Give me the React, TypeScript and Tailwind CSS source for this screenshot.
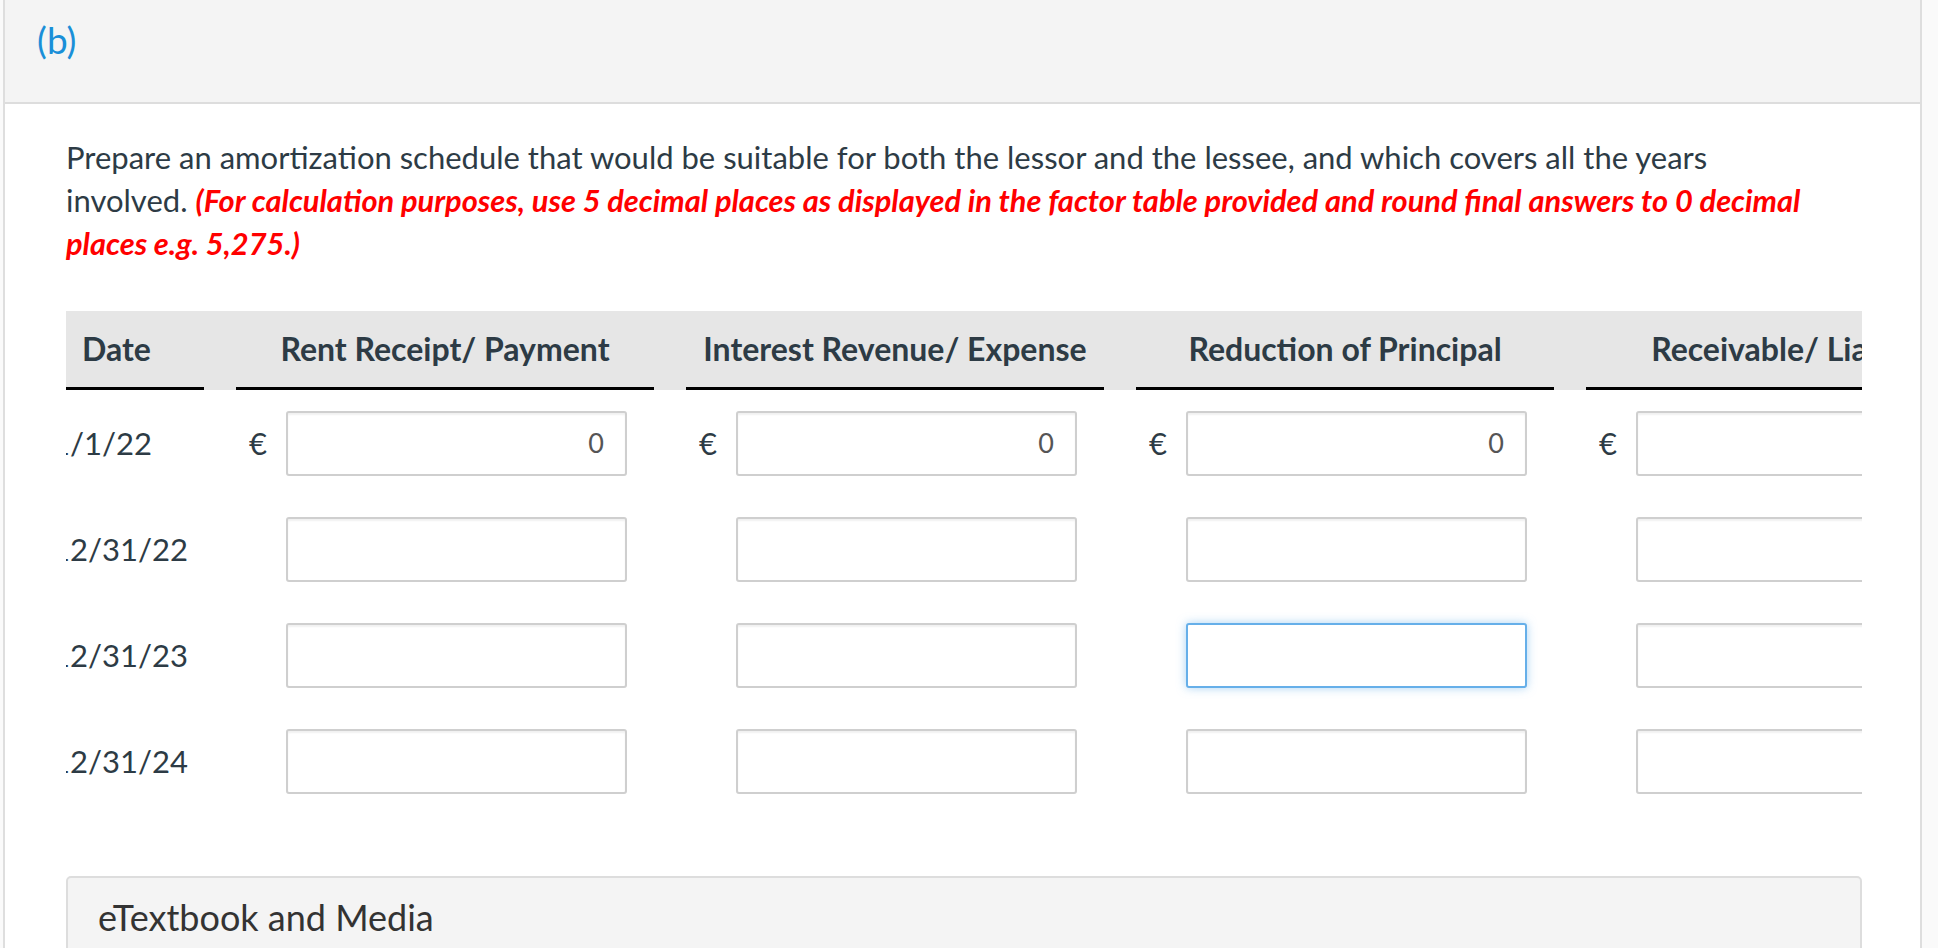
import React from "react";

const font = { fontFamily: "Lato, 'Noto Sans', sans-serif" };

function MoneyCell({ euro, value, focused }: { euro?: boolean; value?: string; focused?: boolean }) {
  return (
    <div className="w-[418px] shrink-0 flex items-center">
      <div className="w-[50px] shrink-0 pl-[13px] text-[31px] leading-none text-[#2d3b45]">{euro ? "€" : ""}</div>
      <div
        className={
          "w-[341px] h-[65px] shrink-0 rounded-[3px] bg-white flex items-center justify-end pr-[21px] text-[27px] text-[#555] " +
          (focused
            ? "border-2 border-[#66afe9] shadow-[0_0_10px_rgba(102,175,233,0.55)]"
            : "border-2 border-[#cfcfcf] shadow-[inset_0_2px_2px_rgba(0,0,0,0.06)]")
        }
      >
        {value}
      </div>
    </div>
  );
}

function Row({ date, first, focusIdx }: { date: string; first?: boolean; focusIdx?: number }) {
  return (
    <div className="flex gap-[32px] h-[106px] items-center">
      <div className="w-[138px] shrink-0 overflow-hidden">
        <span className="block -ml-[14px] text-[31px] text-[#2d3b45] whitespace-nowrap">{date}</span>
      </div>
      {[0, 1, 2, 3].map((i) => (
        <MoneyCell key={i} euro={first} value={first && i < 3 ? "0" : ""} focused={focusIdx === i} />
      ))}
    </div>
  );
}

export default function App() {
  const headers = ["Rent Receipt/ Payment", "Interest Revenue/ Expense", "Reduction of Principal", "Receivable/ Liability"];
  return (
    <div className="w-[1938px] h-[948px] overflow-hidden bg-[#fafafa]" style={font}>
      <div className="ml-[3px] w-[1919px] h-[948px] bg-white border-l-2 border-r-2 border-[#dedede]">
        <div className="h-[104px] bg-[#f4f4f4] border-b-2 border-[#dddddd] pl-[32px] pt-[18px]">
          <span className="text-[37px] leading-[44px] text-[#1a8fd8]">(b)</span>
        </div>
        <div className="px-[61px] pt-[32px]">
          <p className="text-[31px] leading-[43px] text-[#2d3b45] whitespace-nowrap">
            Prepare an amortization schedule that would be suitable for both the lessor and the lessee, and which covers all the years
            <br />
            involved.{" "}
            <span className="text-[#ff0000] font-bold italic text-[30.8px]">
              (For calculation purposes, use 5 decimal places as displayed in the factor table provided and round final answers to 0 decimal
              <br />
              places e.g. 5,275.)
            </span>
          </p>
          <div className="mt-[46px] w-[1796px] overflow-hidden">
            <div className="flex gap-[32px] h-[79px] bg-[#e6e6e6]">
              <div className="w-[138px] shrink-0 border-b-[3px] border-black flex items-center pl-[16px] text-[32px] font-bold text-[#2d3b45]">
                Date
              </div>
              {headers.map((h) => (
                <div
                  key={h}
                  className="w-[418px] shrink-0 border-b-[3px] border-black flex items-center justify-center text-[32px] font-bold text-[#2d3b45] whitespace-nowrap"
                >
                  {h}
                </div>
              ))}
            </div>
            <Row date="1/1/22" first />
            <Row date="12/31/22" />
            <Row date="12/31/23" focusIdx={2} />
            <Row date="12/31/24" />
          </div>
          <div className="mt-[62px] w-[1796px] h-[120px] bg-[#f4f4f4] border-2 border-[#dddddd] rounded-[5px] pl-[30px] pt-[17px]">
            <span className="text-[36px] leading-[44px] text-[#333]">eTextbook and Media</span>
          </div>
        </div>
      </div>
    </div>
  );
}
